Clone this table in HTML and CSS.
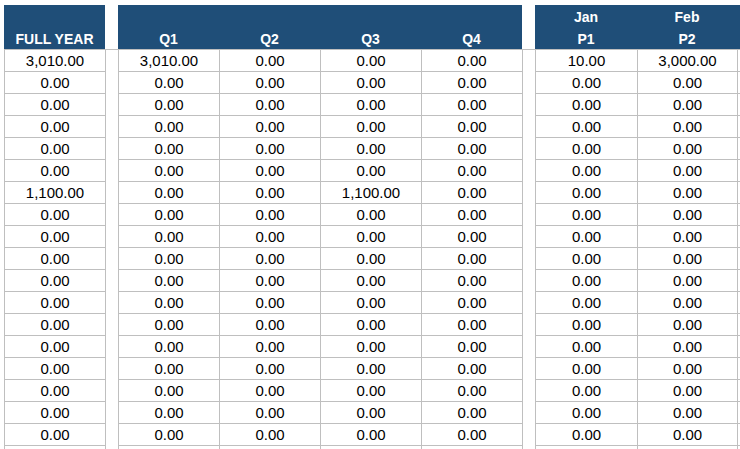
FILE: index.html
```html
<!DOCTYPE html>
<html lang="en">
<head>
<meta charset="utf-8">
<title>Budget sheet</title>
<link rel="stylesheet" href="styles.css">
</head>
<body>
<div class="sheet">
  <div class="row head">
    <div class="h"></div><div class="g"></div>
    <div class="h"></div><div class="h"></div><div class="h"></div><div class="h"></div><div class="g"></div>
    <div class="h">Jan</div><div class="h">Feb</div><div class="h"></div>
  </div>
  <div class="row head">
    <div class="h">FULL YEAR</div><div class="g"></div>
    <div class="h">Q1</div><div class="h">Q2</div><div class="h">Q3</div><div class="h">Q4</div><div class="g"></div>
    <div class="h">P1</div><div class="h">P2</div><div class="h"></div>
  </div>
  <div class="row first">
    <div class="c">3,010.00</div><div class="g"></div>
    <div class="c">3,010.00</div><div class="c">0.00</div><div class="c">0.00</div><div class="c">0.00</div><div class="g"></div>
    <div class="c">10.00</div><div class="c">3,000.00</div><div class="c"></div>
  </div>
  <div class="row"><div class="c">0.00</div><div class="g"></div><div class="c">0.00</div><div class="c">0.00</div><div class="c">0.00</div><div class="c">0.00</div><div class="g"></div><div class="c">0.00</div><div class="c">0.00</div><div class="c"></div></div>
  <div class="row"><div class="c">0.00</div><div class="g"></div><div class="c">0.00</div><div class="c">0.00</div><div class="c">0.00</div><div class="c">0.00</div><div class="g"></div><div class="c">0.00</div><div class="c">0.00</div><div class="c"></div></div>
  <div class="row"><div class="c">0.00</div><div class="g"></div><div class="c">0.00</div><div class="c">0.00</div><div class="c">0.00</div><div class="c">0.00</div><div class="g"></div><div class="c">0.00</div><div class="c">0.00</div><div class="c"></div></div>
  <div class="row"><div class="c">0.00</div><div class="g"></div><div class="c">0.00</div><div class="c">0.00</div><div class="c">0.00</div><div class="c">0.00</div><div class="g"></div><div class="c">0.00</div><div class="c">0.00</div><div class="c"></div></div>
  <div class="row"><div class="c">0.00</div><div class="g"></div><div class="c">0.00</div><div class="c">0.00</div><div class="c">0.00</div><div class="c">0.00</div><div class="g"></div><div class="c">0.00</div><div class="c">0.00</div><div class="c"></div></div>
  <div class="row"><div class="c">1,100.00</div><div class="g"></div><div class="c">0.00</div><div class="c">0.00</div><div class="c">1,100.00</div><div class="c">0.00</div><div class="g"></div><div class="c">0.00</div><div class="c">0.00</div><div class="c"></div></div>
  <div class="row"><div class="c">0.00</div><div class="g"></div><div class="c">0.00</div><div class="c">0.00</div><div class="c">0.00</div><div class="c">0.00</div><div class="g"></div><div class="c">0.00</div><div class="c">0.00</div><div class="c"></div></div>
  <div class="row"><div class="c">0.00</div><div class="g"></div><div class="c">0.00</div><div class="c">0.00</div><div class="c">0.00</div><div class="c">0.00</div><div class="g"></div><div class="c">0.00</div><div class="c">0.00</div><div class="c"></div></div>
  <div class="row"><div class="c">0.00</div><div class="g"></div><div class="c">0.00</div><div class="c">0.00</div><div class="c">0.00</div><div class="c">0.00</div><div class="g"></div><div class="c">0.00</div><div class="c">0.00</div><div class="c"></div></div>
  <div class="row"><div class="c">0.00</div><div class="g"></div><div class="c">0.00</div><div class="c">0.00</div><div class="c">0.00</div><div class="c">0.00</div><div class="g"></div><div class="c">0.00</div><div class="c">0.00</div><div class="c"></div></div>
  <div class="row"><div class="c">0.00</div><div class="g"></div><div class="c">0.00</div><div class="c">0.00</div><div class="c">0.00</div><div class="c">0.00</div><div class="g"></div><div class="c">0.00</div><div class="c">0.00</div><div class="c"></div></div>
  <div class="row"><div class="c">0.00</div><div class="g"></div><div class="c">0.00</div><div class="c">0.00</div><div class="c">0.00</div><div class="c">0.00</div><div class="g"></div><div class="c">0.00</div><div class="c">0.00</div><div class="c"></div></div>
  <div class="row"><div class="c">0.00</div><div class="g"></div><div class="c">0.00</div><div class="c">0.00</div><div class="c">0.00</div><div class="c">0.00</div><div class="g"></div><div class="c">0.00</div><div class="c">0.00</div><div class="c"></div></div>
  <div class="row"><div class="c">0.00</div><div class="g"></div><div class="c">0.00</div><div class="c">0.00</div><div class="c">0.00</div><div class="c">0.00</div><div class="g"></div><div class="c">0.00</div><div class="c">0.00</div><div class="c"></div></div>
  <div class="row"><div class="c">0.00</div><div class="g"></div><div class="c">0.00</div><div class="c">0.00</div><div class="c">0.00</div><div class="c">0.00</div><div class="g"></div><div class="c">0.00</div><div class="c">0.00</div><div class="c"></div></div>
  <div class="row"><div class="c">0.00</div><div class="g"></div><div class="c">0.00</div><div class="c">0.00</div><div class="c">0.00</div><div class="c">0.00</div><div class="g"></div><div class="c">0.00</div><div class="c">0.00</div><div class="c"></div></div>
  <div class="row"><div class="c">0.00</div><div class="g"></div><div class="c">0.00</div><div class="c">0.00</div><div class="c">0.00</div><div class="c">0.00</div><div class="g"></div><div class="c">0.00</div><div class="c">0.00</div><div class="c"></div></div>
  <div class="row"><div class="c"></div><div class="g"></div><div class="c"></div><div class="c"></div><div class="c"></div><div class="c"></div><div class="g"></div><div class="c"></div><div class="c"></div><div class="c"></div></div>
</div>
</body>
</html>
```
FILE: styles.css
```css
html, body {
  margin: 0;
  padding: 0;
  overflow: hidden;
  background: #ffffff;
}

.sheet {
  padding: 5px 0 0 4px;
  font-family: "Liberation Sans", Arial, sans-serif;
  color: #000000;
}

.row {
  display: grid;
  grid-template-columns: 101px 13px 101px 101px 101px 101px 13px 102px 100px 3px;
  height: 22px;
}

.row > div {
  box-sizing: border-box;
  height: 22px;
  text-align: center;
  white-space: nowrap;
}

.h {
  background: #1f4e78;
  color: #ffffff;
  font-weight: bold;
  font-size: 14px;
  line-height: 20px;
  padding-top: 2px;
}

.head .g {
  background: #ffffff;
}

.c {
  border-left: 1px solid #bfbfbf;
  border-top: 1px solid #bfbfbf;
  font-size: 15px;
  line-height: 20px;
  padding-top: 1px;
}

.row:not(.head) .g {
  border-left: 1px solid #bfbfbf;
}

.first .g {
  border-top: 1px solid #bfbfbf;
}
```
